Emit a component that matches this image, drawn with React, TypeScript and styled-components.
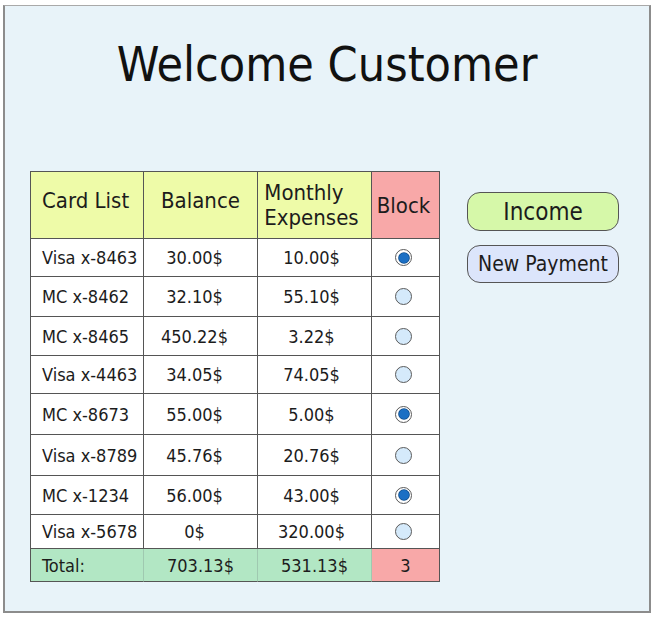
import React from "react";
import styled, { createGlobalStyle } from "styled-components";

const Global = createGlobalStyle`
  html, body { margin: 0; padding: 0; background: #ffffff; }
  body {
    font-family: "DejaVu Sans Condensed", "DejaVu Sans", sans-serif;
    font-stretch: condensed;
    color: #1c1c1c;
  }
`;

const Page = styled.div`
  padding: 5px 0 0 3px;
`;

const Panel = styled.div`
  box-sizing: border-box;
  width: 648px;
  height: 608px;
  background: #e8f3f9;
  border: 2px solid #8c8c8c;
  border-top: 1px solid #a9a9a9;
  display: flex;
  flex-direction: column;
  padding: 0 0 0 25px;
`;

const Title = styled.h1`
  margin: 30px 0 0 -25px;
  font-size: 48px;
  line-height: 56px;
  font-weight: normal;
  text-align: center;
  color: #111;
`;

const Content = styled.div`
  display: flex;
  align-items: flex-start;
  gap: 27px;
  margin-top: 79px;
`;

const Table = styled.div`
  display: flex;
  flex-direction: column;
  border-top: 1px solid #555;
  border-left: 1px solid #555;
`;

const Row = styled.div<{ $h: number }>`
  display: grid;
  grid-template-columns: 113px 114px 114px 68px;
  height: ${(p) => p.$h}px;
`;

type Tone = "white" | "head" | "block" | "total" | "totalBlock";
const bg: Record<Tone, string> = {
  white: "#ffffff",
  head: "#eefba8",
  block: "#f8a8a8",
  total: "#b2e7c4",
  totalBlock: "#f8a8a8",
};

const Cell = styled.div<{
  $tone?: Tone;
  $align?: "left" | "center";
  $padR?: number;
  $padB?: number;
  $size?: number;
  $soft?: boolean;
}>`
  box-sizing: border-box;
  display: flex;
  align-items: center;
  justify-content: ${(p) => (p.$align === "left" ? "flex-start" : "center")};
  padding: 0 ${(p) => p.$padR ?? 0}px ${(p) => p.$padB ?? 0}px
    ${(p) => (p.$align === "left" ? 11 : 0)}px;
  background: ${(p) => bg[p.$tone ?? "white"]};
  border-right: 1px solid ${(p) => (p.$soft ? "#9fc9b0" : "#555")};
  border-bottom: 1px solid #555;
  font-size: ${(p) => p.$size ?? 18}px;
  white-space: nowrap;
  overflow: hidden;
`;

const TwoLine = styled.span`
  display: block;
  text-align: left;
  line-height: 25px;
`;

const Radio = styled.span<{ $on: boolean }>`
  box-sizing: border-box;
  width: 17px;
  height: 17px;
  border-radius: 50%;
  border: 1.5px solid #5a5a5a;
  background: ${(p) => (p.$on ? "#ffffff" : "#d5eafb")};
  display: flex;
  align-items: center;
  justify-content: center;
  &::after {
    content: "";
    display: ${(p) => (p.$on ? "block" : "none")};
    width: 10px;
    height: 10px;
    border-radius: 50%;
    background: #1b6fc4;
    box-shadow: 0 0 0 0.8px #0f4c8a;
  }
`;

const Side = styled.div`
  display: flex;
  flex-direction: column;
  gap: 14px;
  margin-top: 21px;
`;

const Button = styled.button<{ $bg: string; $size: number; $h: number }>`
  box-sizing: border-box;
  width: 152px;
  height: ${(p) => p.$h}px;
  border: 1px solid #555;
  border-radius: 13px;
  background: ${(p) => p.$bg};
  font-family: inherit;
  font-stretch: condensed;
  font-size: ${(p) => p.$size}px;
  color: #1c1c1c;
  padding: 0;
  cursor: pointer;
`;

const rows = [
  { card: "Visa x-8463", bal: "30.00$", exp: "10.00$", on: true, h: 38 },
  { card: "MC x-8462", bal: "32.10$", exp: "55.10$", on: false, h: 40 },
  { card: "MC x-8465", bal: "450.22$", exp: "3.22$", on: false, h: 39 },
  { card: "Visa x-4463", bal: "34.05$", exp: "74.05$", on: false, h: 38 },
  { card: "MC x-8673", bal: "55.00$", exp: "5.00$", on: true, h: 41 },
  { card: "Visa x-8789", bal: "45.76$", exp: "20.76$", on: false, h: 41 },
  { card: "MC x-1234", bal: "56.00$", exp: "43.00$", on: true, h: 39 },
  { card: "Visa x-5678", bal: "0$", exp: "320.00$", on: false, h: 34 },
];

export default function App() {
  return (
    <>
      <Global />
      <Page>
        <Panel>
          <Title>Welcome Customer</Title>
          <Content>
            <Table>
              <Row $h={67}>
                <Cell $tone="head" $align="left" $size={22} $padB={10}>
                  Card List
                </Cell>
                <Cell $tone="head" $size={22} $padB={10}>
                  Balance
                </Cell>
                <Cell $tone="head" $size={22} $padR={6}>
                  <TwoLine>
                    Monthly
                    <br />
                    Expenses
                  </TwoLine>
                </Cell>
                <Cell $tone="block" $size={22} $padR={4}>
                  Block
                </Cell>
              </Row>
              {rows.map((r) => (
                <Row key={r.card} $h={r.h}>
                  <Cell $align="left">{r.card}</Cell>
                  <Cell $padR={12}>{r.bal}</Cell>
                  <Cell $padR={6}>{r.exp}</Cell>
                  <Cell $padR={4}>
                    <Radio $on={r.on} />
                  </Cell>
                </Row>
              ))}
              <Row $h={33}>
                <Cell $tone="total" $align="left" $soft>
                  Total:
                </Cell>
                <Cell $tone="total" $soft>
                  703.13$
                </Cell>
                <Cell $tone="total" $soft>
                  531.13$
                </Cell>
                <Cell $tone="totalBlock">3</Cell>
              </Row>
            </Table>
            <Side>
              <Button $bg="#d6f8a9" $size={24} $h={39}>
                Income
              </Button>
              <Button $bg="#dce5fb" $size={21} $h={38}>
                New Payment
              </Button>
            </Side>
          </Content>
        </Panel>
      </Page>
    </>
  );
}
